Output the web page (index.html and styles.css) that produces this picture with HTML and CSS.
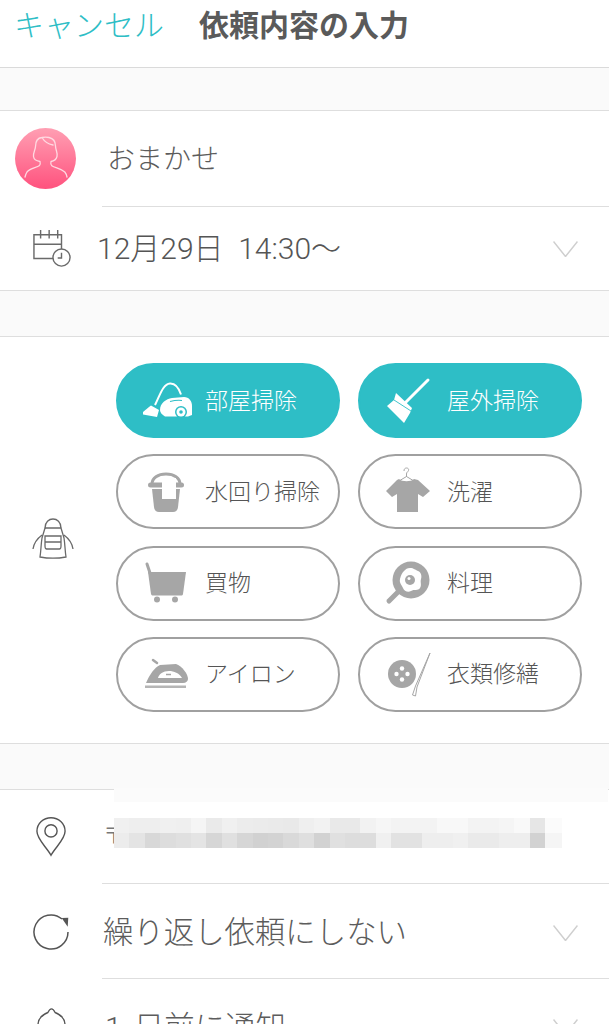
FILE: index.html
```html
<!DOCTYPE html>
<html lang="ja">
<head>
<meta charset="utf-8">
<title>依頼内容の入力</title>
<link rel="stylesheet" href="styles.css">
</head>
<body>
<main class="app">
  <header class="header">
    <span class="cancel">キャンセル</span>
    <h1 class="title">依頼内容の入力</h1>
  </header>
  <div class="band band-top"></div>

  <section class="row row-staff">
    <svg class="avatar" viewBox="0 0 61 61">
      <defs><linearGradient id="pink" x1="0" y1="0" x2="0" y2="1"><stop offset="0" stop-color="#ff9fb3"/><stop offset="1" stop-color="#ff527e"/></linearGradient></defs>
      <circle cx="30.5" cy="30.5" r="30.5" fill="url(#pink)"/>
      <path d="M27 9.5c-5 .5-6.5 5-6.5 9 0 3-2.5 6-2 10 .4 3 3 4.5 6.5 5 .5 2 .5 3-.5 4-3 2.5-9 2-12.5 6.500-1 1.500-1.500 3-2 5M34 9.500c4.500 1 6.500 4.500 6.500 8.500 0 4 2.500 7 1.500 10.500-.8 3-3 4.500-6 5-.5 2-.5 3.200.8 4.200 3 2.300 9 2.500 13 6.300 1 1.200 1.800 3 2.200 5M27 9.500c2 3.500 6 6.500 11 7.500M27 9.500c2.500-.6 5-.5 7 0" fill="none" stroke="#ffd9e1" stroke-width="1.300" stroke-linecap="round"/>
    </svg>
    <span class="staff-name">おまかせ</span>
  </section>
  <hr class="sep">

  <section class="row row-date">
    <svg class="icon-date" viewBox="0 0 42 40" fill="none" stroke="#6a6a6a" stroke-width="1.500">
      <path d="M30 30H2V5h29v16M2 15h29M9 0v9M18 0v9M27 0v9"/>
      <circle cx="31" cy="29" r="9" fill="#fff"/>
      <path d="M31 24v5.500h-4"/>
    </svg>
    <span class="date-text">12月29日  14:30〜</span>
    <svg class="chevron" viewBox="0 0 25 16"><path d="M.5.5l12 15 12-15"/></svg>
  </section>
  <div class="band"></div>

  <section class="services">
    <svg class="icon-apron" viewBox="29 517 44 43" fill="none" stroke="#6a6a6a" stroke-width="1.300">
      <path d="M43 528c0-12 16-12 16 0M43 528h16M43 528l-3 10c-1 6-1 13-2 19 8 1.500 18 1.500 26 0-1-6-1-13-2-19l-3-10M40 535c-4 3-8 7-9 14M62 535c4 3 8 7 9 14M43 536h16v10c0 3-1 3-3 3H46c-2 0-3 0-3-3zM43 542h16"/>
    </svg>
    <div class="service-grid">
      <button class="svc on">
        <svg class="svc-icon" viewBox="140 363 66 75">
          <path d="M155 405c5-10 8-21 15-21.500 5-.3 9 5 11 11" fill="none" stroke="#fff" stroke-width="2"/>
          <path d="M160 410c0-7 6-11 12-12l12-1c5 0 8 4 8 9v9l-4 1.500h-23c-3-2-5-4-5-6.500z" fill="#fff"/>
          <path d="M143 412l6-5 2-1.500 8 4.500-2 7-14-2.500z" fill="#fff"/>
          <path d="M170 401.500c4-1 8-1.500 12-1" stroke="#2ebec6" stroke-width="1.100" fill="none"/>
          <circle cx="181" cy="412" r="6" fill="#2ebec6"/>
          <circle cx="181" cy="412" r="4.500" fill="#fff"/>
          <circle cx="181" cy="412" r="1.800" fill="#2ebec6"/>
        </svg>
        <span>部屋掃除</span>
      </button>
      <button class="svc on">
        <svg class="svc-icon" viewBox="382 363 66 75">
          <path d="M428 380l-22 22" stroke="#fff" stroke-width="3" stroke-linecap="round"/>
          <path d="M396 393l16 15-2 5-6 10-17-17 7-6z" fill="#fff"/>
          <path d="M394 400l17 11" stroke="#2ebec6" stroke-width=".9"/>
        </svg>
        <span>屋外掃除</span>
      </button>
      <button class="svc">
        <svg class="svc-icon" viewBox="140 454 66 75">
          <path d="M152 484c0-6 6-10 14-10s14 4 14 10" fill="none" stroke="#a6a6a6" stroke-width="3"/>
          <rect x="148" y="482.500" width="36" height="5" rx="2.500" fill="#a6a6a6"/>
          <path d="M152 489h28l-2 18c-.4 3-2 5-5 5h-14c-3 0-4.600-2-5-5z" fill="#a6a6a6"/>
          <rect x="162" y="478" width="14" height="21" fill="#fff"/>
        </svg>
        <span>水回り掃除</span>
      </button>
      <button class="svc">
        <svg class="svc-icon" viewBox="382 454 66 75">
          <path d="M404 471c0-2 1-3 2.500-3s2.500 1 2 2.500c-.5 1.500-2 1.500-2 3.500v3M399 481l7.500-4.500 7.500 4.500" fill="none" stroke="#a6a6a6" stroke-width="1"/>
          <path d="M399 479c3 3 12 3 15 0l4 1 12 11-7 6-5-3v18h-21v-18l-5 3-6-6 11-11z" fill="#a6a6a6"/>
        </svg>
        <span>洗濯</span>
      </button>
      <button class="svc">
        <svg class="svc-icon" viewBox="140 546 66 75">
          <path d="M147 564l3 9" stroke="#a6a6a6" stroke-width="3" stroke-linecap="round"/>
          <path d="M148 572h38l-3 22c-.2 1-1 1.500-2 1.500h-28c-1 0-1.500-.5-2-1.500z" fill="#a6a6a6"/>
          <circle cx="157" cy="599.500" r="3" fill="#a6a6a6"/>
          <circle cx="175" cy="599.500" r="3" fill="#a6a6a6"/>
        </svg>
        <span>買物</span>
      </button>
      <button class="svc">
        <svg class="svc-icon" viewBox="382 546 66 75">
          <circle cx="411" cy="580" r="18.500" fill="#a6a6a6"/>
          <path d="M398 592l-9 9" stroke="#a6a6a6" stroke-width="5" stroke-linecap="round"/>
          <path d="M410 568c4 0 5 2 8 3s4 5 3 8 1 6-1 9-6 1-9 3-7 0-8-3-4-5-3-9 2-6 4-8 3-3 6-3z" fill="#fff"/>
          <circle cx="410" cy="580" r="5" fill="#a6a6a6"/>
          <circle cx="409" cy="578.500" r="1.500" fill="#fff"/>
        </svg>
        <span>料理</span>
      </button>
      <button class="svc">
        <svg class="svc-icon" viewBox="140 637 66 75">
          <path d="M153 660l4 3" stroke="#a6a6a6" stroke-width="2.500" stroke-linecap="round"/>
          <path d="M146 683c4-9 8-15 14-18l16-1c6 2 12 10 12 15 0 2-2 4-5 4z" fill="#a6a6a6"/>
          <path d="M158 678c1-4 5-7 11-7 5 0 10 2 13 7z" fill="#fff"/>
          <path d="M166 674.500h5" stroke="#a6a6a6" stroke-width="1.500"/>
          <rect x="145" y="685.500" width="41" height="2.500" fill="#b5b5b5"/>
        </svg>
        <span>アイロン</span>
      </button>
      <button class="svc">
        <svg class="svc-icon" viewBox="382 637 66 75">
          <circle cx="402" cy="674" r="14" fill="#a6a6a6"/>
          <circle cx="402" cy="668.500" r="2.200" fill="#fff"/>
          <circle cx="402" cy="679.500" r="2.200" fill="#fff"/>
          <circle cx="396.500" cy="674" r="2.200" fill="#fff"/>
          <circle cx="407.500" cy="674" r="2.200" fill="#fff"/>
          <path d="M430 653l-13 34-1.500 9-3-1 3-9z" fill="#fff" stroke="#a6a6a6" stroke-width="1"/>
        </svg>
        <span>衣類修繕</span>
      </button>
    </div>
  </section>
  <div class="band"></div>

  <section class="row row-address">
    <div class="redact-band"></div>
    <svg class="icon-pin" viewBox="0 0 32 42" fill="none" stroke="#555" stroke-width="1.500">
      <path d="M16 41C11 32 1 24 1 15.500 1 7 8 1 16 1s15 6 15 14.500C31 24 21 32 16 41z"/>
      <circle cx="16" cy="15" r="6.500"/>
    </svg>
    <span class="address-text">〒</span>
    <div class="mosaic"></div>
  </section>
  <hr class="sep">

  <section class="row row-repeat">
    <svg class="icon-repeat" viewBox="33 914 37 37" fill="none" stroke="#555" stroke-width="1.500">
      <path d="M62 919A17 17 0 1 0 68 932"/>
      <path d="M61.700 918l6.600-.3-.6 9z" fill="#555" stroke="none"/>
    </svg>
    <span class="row-text">繰り返し依頼にしない</span>
    <svg class="chevron" viewBox="0 0 25 16"><path d="M.5.500l12 15 12-15"/></svg>
  </section>
  <hr class="sep">

  <section class="row row-notice">
    <svg class="icon-bell" viewBox="0 0 32 40" fill="none" stroke="#555" stroke-width="1.500">
      <path d="M1 40V19C1 11 7 7 12 5c1-2 2-4 4-4s3 2 4 4c5 2 11 6 11 14v21"/>
    </svg>
    <span class="row-text"><span class="num">1</span>日前に通知</span>
    <svg class="chevron" viewBox="0 0 25 16"><path d="M.5.500l12 15 12-15"/></svg>
  </section>
</main>
</body>
</html>
```

FILE: styles.css
```css
* { box-sizing: border-box; }
html, body { margin: 0; padding: 0; background: #fff; }
body {
  font-family: "Noto Sans CJK JP", "Noto Sans", sans-serif;
  color: #555;
  font-weight: 300;
}
.app { width: 609px; height: 1024px; overflow: hidden; }

.header {
  height: 68px;
  display: flex;
  align-items: flex-start;
  gap: 35px;
  padding: 2px 0 0 14px;
  border-bottom: 1px solid #dadada;
}
.cancel { font-size: 30px; line-height: 42px; color: #2ebec6; }
.title { margin: 0; font-size: 30px; line-height: 42px; font-weight: 700; color: #5a5a5a; }

.band { height: 46px; background: #fafafa; border-bottom: 1px solid #dedede; }
.band-top { height: 43px; }

.row { position: relative; display: flex; align-items: center; }
.sep { margin: 0 0 0 102px; height: 1px; border: 0; background: #dedede; }

.row-staff { height: 95px; padding-left: 15px; }
.avatar { width: 61px; height: 61px; flex: none; }
.staff-name { margin: 0 0 4px 31px; font-size: 28px; color: #5c5c5c; }

.row-date { height: 84px; padding-left: 32px; border-bottom: 1px solid #dedede; }
.icon-date { width: 40px; height: 38px; flex: none; margin-top: 1px; }
.date-text {
  margin: 0 0 6px 25px;
  font-family: Roboto, "Noto Sans CJK JP", sans-serif;
  font-size: 30px;
  color: #555;
  white-space: pre;
}
.chevron {
  position: absolute;
  right: 31px;
  top: 34px;
  width: 25px;
  height: 16px;
  fill: none;
  stroke: #cfcfcf;
  stroke-width: 1.500;
}
.row-repeat .chevron { top: 41px; }
.row-notice .chevron { top: 40px; }

.services {
  height: 407px;
  display: flex;
  align-items: flex-start;
  padding: 26px 0 0 31px;
  border-bottom: 1px solid #dedede;
}
.icon-apron { width: 44px; height: 43px; flex: none; margin-top: 154px; }
.service-grid {
  margin-left: 41px;
  display: grid;
  grid-template-columns: 224px 224px;
  grid-auto-rows: 75px;
  column-gap: 18px;
  row-gap: 16.330px;
}
.svc {
  display: flex;
  align-items: center;
  padding: 0;
  border: 2px solid #a0a0a0;
  border-radius: 38px;
  background: #fff;
  font: inherit;
  font-size: 23px;
  color: #555;
  text-align: left;
  white-space: nowrap;
}
.svc span { margin-bottom: 4px; }
.svc.on { background: #2ebec6; border-color: #2ebec6; color: #fff; }
.svc-icon { width: 66px; height: 75px; flex: none; margin: 0 -1px 0 22px; }

.row-address { height: 93px; padding-left: 36px; }
.icon-pin { width: 30px; height: 41px; flex: none; }
.address-text { margin: 0 0 8px 37px; font-size: 22px; color: #777; }
.redact-band {
  position: absolute;
  left: 114px;
  top: -2px;
  width: 494px;
  height: 14px;
  background: #fbfbfb;
}
.mosaic {
  position: absolute;
  left: 114px;
  top: 28px;
  width: 448px;
  height: 30px;
  background-repeat: no-repeat;
  background-size: 100% 50%;
  background-position: top, bottom;
  background-image:
    linear-gradient(90deg, #f0f0f0 0 15.400px, #eeeeee 0 30.800px, #eeeeee 0 46.200px, #f0f0f0 0 61.600px, #efefef 0 77px, #f5f5f5 0 92.400px, #eaeaea 0 107.800px, #f0f0f0 0 123.200px, #ececec 0 138.600px, #ebebeb 0 154px, #eaeaea 0 169.400px, #e9e9e9 0 184.800px, #efefef 0 200.200px, #f2f2f2 0 215.600px, #e9e9e9 0 231px, #e9e9e9 0 246.400px, #f2f2f2 0 261.800px, #f6f6f6 0 277.200px, #f3f3f3 0 292.600px, #f3f3f3 0 308px, #f3f3f3 0 323.400px, #f8f8f8 0 338.800px, #f8f8f8 0 354.200px, #f3f3f3 0 369.600px, #f3f3f3 0 385px, #f5f5f5 0 400.400px, #f9f9f9 0 415.800px, #e6e6e6 0 431.200px, #fbfbfb 0 448px),
    linear-gradient(90deg, #ececec 0 15.400px, #e4e4e4 0 30.800px, #d8d8d8 0 46.200px, #dddddd 0 61.600px, #e0e0e0 0 77px, #e4e4e4 0 92.400px, #d6d6d6 0 107.800px, #e0e0e0 0 123.200px, #d6d6d6 0 138.600px, #d1d1d1 0 154px, #d3d3d3 0 169.400px, #d9d9d9 0 184.800px, #dfdfdf 0 200.200px, #d2d2d2 0 215.600px, #e0e0e0 0 231px, #dddddd 0 246.400px, #dddddd 0 261.800px, #f0f0f0 0 277.200px, #e2e2e2 0 292.600px, #e2e2e2 0 308px, #eeeeee 0 323.400px, #eeeeee 0 338.800px, #f0f0f0 0 354.200px, #eaeaea 0 369.600px, #eaeaea 0 385px, #eeeeee 0 400.400px, #eeeeee 0 415.800px, #d2d2d2 0 431.200px, #f5f5f5 0 448px);
}

.row-repeat { height: 94px; padding-left: 33px; }
.icon-repeat { width: 37px; height: 37px; flex: none; margin-top: 2px; }
.row-text { margin: 0 0 2px 33px; font-size: 30.400px; color: #5c5c5c; }

.row-notice { height: 94px; padding-left: 37px; align-items: flex-start; }
.icon-bell { width: 29px; height: 36px; flex: none; margin-top: 29px; }
.row-notice .row-text { margin: 25px 0 0 39px; line-height: 42px; }
.num { font-family: Roboto, sans-serif; margin-right: 12px; }
```
